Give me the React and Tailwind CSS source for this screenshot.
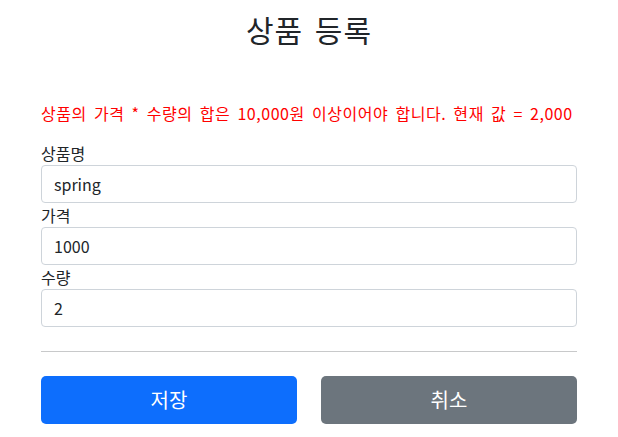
export default function App() {
  const font = "font-['Noto_Sans_CJK_KR','Noto_Sans',sans-serif]";
  return (
    <div className={`min-h-[437px] bg-white text-[#212529] ${font}`}>
      <div className="mx-auto max-w-[560px] px-3">
        <div className="pt-[10px] text-center">
          <h2 className="text-[30px] leading-[38px] font-normal tracking-[1px] [word-spacing:4px]">상품 등록</h2>
        </div>
        <p className="mt-[53px] mb-4 text-base leading-6 text-[#ff0000] whitespace-nowrap tracking-[0.55px] [word-spacing:3px]">
          상품의 가격 * 수량의 합은 10,000원 이상이어야 합니다. 현재 값 = 2,000
        </p>
        <form>
          <div>
            <label className="block text-base leading-6">상품명</label>
            <input
              defaultValue="spring"
              className="block h-[38px] w-full rounded border border-[#ced4da] px-3 text-base text-[#212529] outline-none"
            />
          </div>
          <div>
            <label className="block text-base leading-6">가격</label>
            <input
              defaultValue="1000"
              className="block h-[38px] w-full rounded border border-[#ced4da] px-3 text-base text-[#212529] outline-none"
            />
          </div>
          <div>
            <label className="block text-base leading-6">수량</label>
            <input
              defaultValue="2"
              className="block h-[38px] w-full rounded border border-[#ced4da] px-3 text-base text-[#212529] outline-none"
            />
          </div>
          <hr className="my-6 border-t border-[#c8c9ca]" />
          <div className="grid grid-cols-2 gap-6">
            <button type="button" className="h-12 rounded-[5px] bg-[#0d6efd] text-xl text-white">
              저장
            </button>
            <button type="button" className="h-12 rounded-[5px] bg-[#6c757d] text-xl text-white">
              취소
            </button>
          </div>
        </form>
      </div>
    </div>
  );
}
